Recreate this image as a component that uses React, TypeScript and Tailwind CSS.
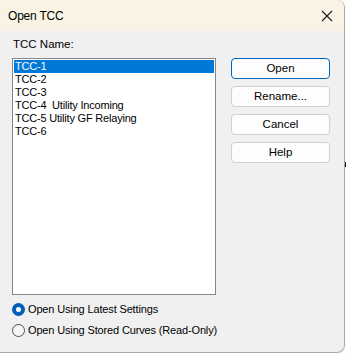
import { useState } from "react";

const items = [
  "TCC-1",
  "TCC-2",
  "TCC-3",
  "TCC-4  Utility Incoming",
  "TCC-5 Utility GF Relaying",
  "TCC-6",
];

const buttons = ["Open", "Rename...", "Cancel", "Help"];

const Radio: React.FC<{ checked: boolean; label: string }> = ({ checked, label }) => (
  <div className="flex items-center gap-[3px] h-[13px]">
    {checked ? (
      <span className="w-[13px] h-[13px] rounded-full bg-[#005fb8] flex items-center justify-center">
        <span className="w-[5px] h-[5px] rounded-full bg-white" />
      </span>
    ) : (
      <span className="w-[13px] h-[13px] rounded-full border border-[#4f4f4f] bg-[#f6f6f6]" />
    )}
    <span className="text-[11px] tracking-[-0.15px]">{label}</span>
  </div>
);

export default function App() {
  const [selected] = useState(0);

  return (
    <div
      className="w-[346px] h-[353px] bg-[#fafafa] flex text-[11.5px] text-black"
      style={{ fontFamily: '"Liberation Sans", Arial, sans-serif' }}
    >
      <div className="w-[345px] h-[353px] flex flex-col bg-[#f0f0f0] border-r border-b border-[#a8a8a8] rounded-tr-[8px] rounded-br-[8px] overflow-hidden">
        <div className="h-[31px] bg-[#f8f3e4] flex items-center justify-between pl-[8px] pr-[8px]">
          <span className="text-[12px] tracking-[-0.2px]">Open TCC</span>
          <svg width="12" height="12" viewBox="0 0 12 12" className="mr-[3px]">
            <path d="M1 1 L11 11 M11 1 L1 11" stroke="#1a1a1a" strokeWidth="1.1" />
          </svg>
        </div>
        <div className="flex-1 flex flex-col pl-[12px] pt-[6px]">
          <div className="h-[14px] leading-[14px] pl-[1px]">TCC Name:</div>
          <div className="flex gap-[15px] mt-[7px]">
            <div className="w-[204px] h-[237px] bg-white border border-[#828790] p-[1px]">
              {items.map((item, i) => (
                <div
                  key={item}
                  className={`h-[13px] leading-[13px] pl-[1px] whitespace-pre text-[11px] tracking-[-0.2px] ${
                    i === selected ? "bg-[#0078d7] text-white" : ""
                  }`}
                >
                  {item}
                </div>
              ))}
            </div>
            <div className="flex flex-col gap-[7px]">
              {buttons.map((b, i) => (
                <button
                  key={b}
                  className={`w-[99px] h-[21px] rounded-[4px] bg-[#fdfdfd] border ${
                    i === 0 ? "border-[#0067c0]" : "border-[#d0d0d0]"
                  }`}
                >
                  {b}
                </button>
              ))}
            </div>
          </div>
          <div className="flex flex-col gap-[8px] mt-[8px]">
            <Radio checked label="Open Using Latest Settings" />
            <Radio checked={false} label="Open Using Stored Curves (Read-Only)" />
          </div>
        </div>
      </div>
      <div className="flex-1 flex flex-col">
        <div className="h-[162px]" />
        <div className="h-[5px] bg-black" />
      </div>
    </div>
  );
}
